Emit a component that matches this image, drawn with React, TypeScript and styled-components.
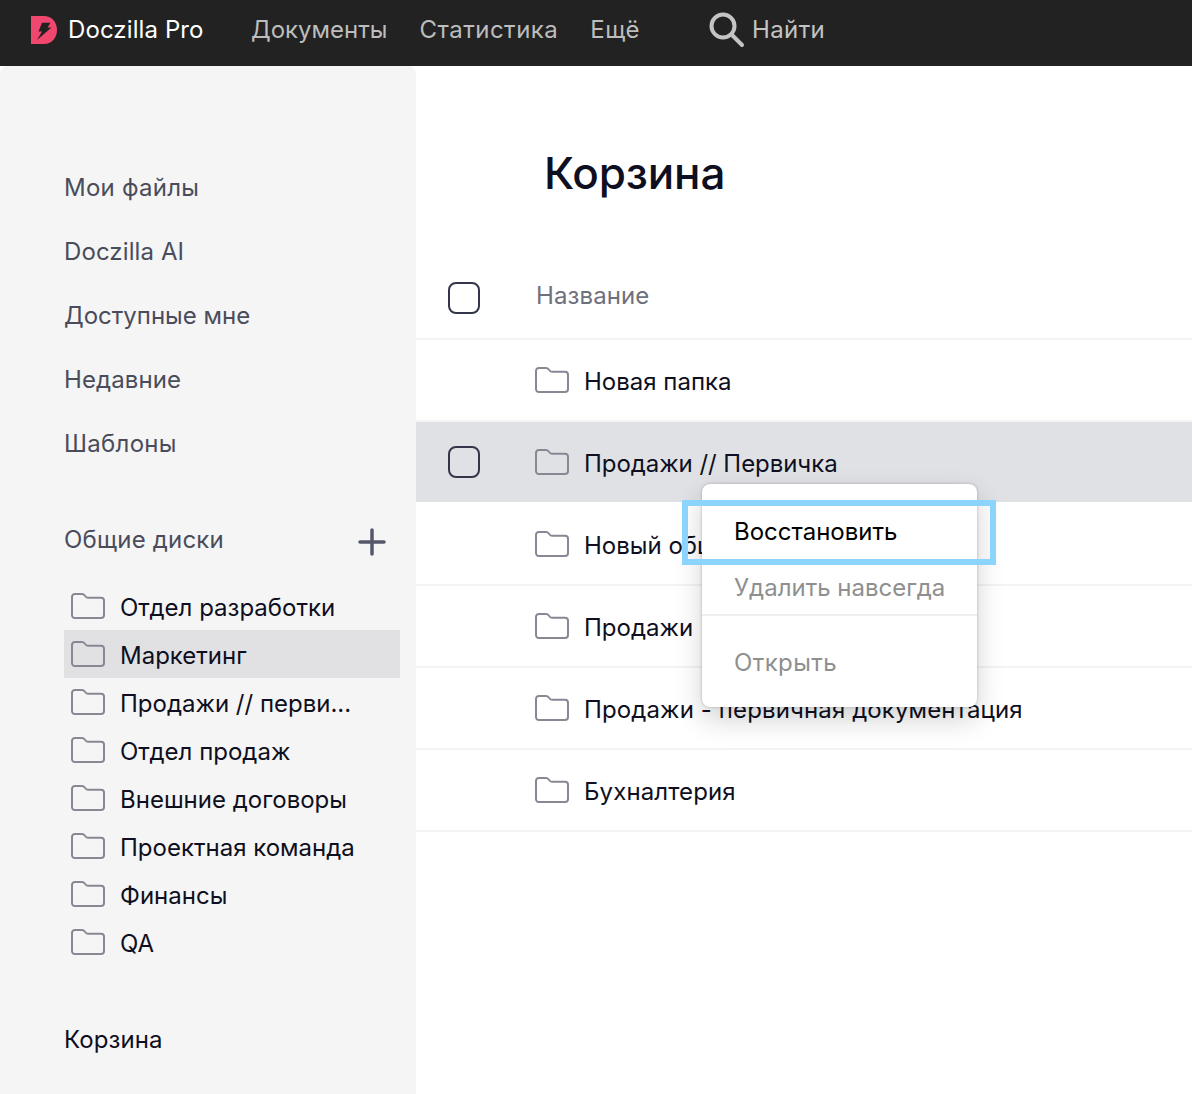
import React from "react";
import styled, { createGlobalStyle } from "styled-components";

const GlobalStyle = createGlobalStyle`
  html, body {
    margin: 0;
    padding: 0;
    background: #222222;
  }
  body {
    font-family: Inter, "Liberation Sans", sans-serif;
    width: 1192px;
    height: 1094px;
    overflow: hidden;
  }
  * {
    box-sizing: border-box;
  }
`;

const Page = styled.div`
  width: 1192px;
  height: 1094px;
  display: flex;
  flex-direction: column;
  overflow: hidden;
`;

const TopBar = styled.header`
  height: 66px;
  flex: none;
  display: flex;
  align-items: center;
  padding: 0 0 7px 31px;
  background: #222222;
`;

const Brand = styled.div`
  display: flex;
  align-items: center;
  gap: 11px;
  width: 220px;
  color: #ffffff;
  font-size: 24px;
  letter-spacing: 0.1px;
`;

const TopLink = styled.a<{ $spacing?: number }>`
  color: #bdbdbd;
  font-size: 24px;
  letter-spacing: ${(props) => props.$spacing || 0}px;
  margin-right: 32px;
`;

const Search = styled.div`
  display: flex;
  align-items: center;
  gap: 7px;
  margin-left: 37px;
  color: #c4c4c4;
  font-size: 24px;
  letter-spacing: 0.35px;
`;

const Body = styled.div`
  flex: 1;
  display: flex;
  background: #ffffff;
`;

const Sidebar = styled.aside`
  width: 416px;
  flex: none;
  padding: 89px 16px 0 64px;
  background: #f5f5f5;
  border-radius: 8px 8px 0 0;
`;

const NavItem = styled.div<{ $dark?: boolean; $spacing?: number }>`
  height: 64px;
  display: flex;
  align-items: center;
  color: ${(props) => (props.$dark ? "#0e0f20" : "#4a4c5c")};
  font-size: 24px;
  letter-spacing: ${(props) => props.$spacing || 0}px;
`;

const DrivesHeader = styled.div`
  height: 64px;
  margin-top: 32px;
  padding-right: 14px;
  display: flex;
  align-items: center;
  justify-content: space-between;
  color: #4a4c5c;
  font-size: 24px;
  letter-spacing: 0.2px;
`;

const PlusWrap = styled.span`
  display: flex;
  padding-top: 6px;
`;

const DriveList = styled.div`
  margin: 11px 0 41px;
`;

const DriveRow = styled.div<{ $active?: boolean }>`
  height: 48px;
  display: flex;
  align-items: center;
  gap: 15px;
  padding-left: 7px;
  background: ${(props) => (props.$active ? "#e1e1e4" : "transparent")};
  color: #0e0f20;
  font-size: 24px;
`;

const DriveName = styled.span`
  padding-top: 3px;
`;

const Main = styled.main`
  position: relative;
  flex: 1;
  min-width: 0;
`;

const Title = styled.h1`
  height: 184px;
  margin: 0;
  padding: 76px 0 0 128px;
  color: #0e0f20;
  font-size: 44px;
  font-weight: 500;
  line-height: 62px;
  letter-spacing: -0.15px;
`;

const HeaderRow = styled.div`
  height: 90px;
  display: flex;
  align-items: center;
  padding: 2px 0 0 32px;
  border-bottom: 2px solid #f3f3f4;
  color: #6e707c;
  font-size: 24px;
  letter-spacing: 0.1px;
`;

const Row = styled.div<{ $selected?: boolean }>`
  height: 82px;
  display: flex;
  align-items: center;
  padding-left: ${(props) => (props.$selected ? "32px" : "119px")};
  border-bottom: 2px solid ${(props) => (props.$selected ? "#ffffff" : "#f3f3f4")};
  background: ${(props) => (props.$selected ? "#e0e1e5" : "#ffffff")};
  color: #0e0f20;
  font-size: 24px;
`;

const RowLabel = styled.span<{ $spacing?: number }>`
  padding-top: 2px;
  letter-spacing: ${(props) => props.$spacing || 0}px;
`;

const Check = styled.span<{ $gap: number; $drop?: number }>`
  width: 32px;
  height: 32px;
  flex: none;
  margin-top: ${(props) => props.$drop || 0}px;
  margin-right: ${(props) => props.$gap}px;
  border: 2px solid #33364a;
  border-radius: 8px;
`;

const FolderGap = styled.span`
  display: flex;
  margin-right: 15px;
`;

const Menu = styled.div`
  position: absolute;
  left: 286px;
  top: 418px;
  width: 275px;
  height: 223px;
  padding-top: 19px;
  background: #ffffff;
  border-radius: 8px;
  box-shadow: 0 0 3px rgba(0, 0, 0, 0.25), 0 12px 28px rgba(0, 0, 0, 0.18);
`;

const MenuItem = styled.div<{ $muted?: boolean; $spacing?: number }>`
  height: 56px;
  display: flex;
  align-items: center;
  padding-left: 32px;
  color: ${(props) => (props.$muted ? "#8f8f8f" : "#000000")};
  font-size: 24px;
  letter-spacing: ${(props) => props.$spacing || 0}px;
`;

const MenuDivider = styled.div`
  height: 2px;
  margin: -1px 0 18px;
  background: #eeeeee;
`;

const Highlight = styled.div`
  position: absolute;
  left: 266px;
  top: 434px;
  width: 314px;
  height: 65px;
  border: 6px solid #8ad4fd;
`;

const FolderIcon = () => (
  <svg width="34" height="26" viewBox="0 0 34 26" fill="none">
    <path
      d="M1 4C1 2.200 2.200 1 4 1h7c1.300 0 2 .5 2.800 1.500l.8 1c.6.8 1.200 1.300 2.400 1.300H30c1.800 0 3 1.200 3 3V22c0 1.800-1.200 3-3 3H4c-1.800 0-3-1.200-3-3V4z"
      stroke="#868894"
      strokeWidth="2"
    />
  </svg>
);

const Logo = () => (
  <svg width="26" height="28" viewBox="0 0 26 28">
    <path d="M0 0h13c7.500 0 13 6 13 14s-5.500 14-13 14H0V0z" fill="#f0476f" />
    <path d="M11 6.700h8.500l-3 4.800h4L6 24l5-8.500H7.500L11 6.700z" fill="#222222" />
  </svg>
);

const SearchIcon = () => (
  <svg width="36" height="36" viewBox="0 0 36 36" fill="none" stroke="#c4c4c4" strokeWidth="4">
    <circle cx="14" cy="14" r="11.500" />
    <path d="M22.500 22.500L33 33" strokeLinecap="round" />
  </svg>
);

const PlusIcon = () => (
  <svg width="28" height="28" viewBox="0 0 28 28" fill="none" stroke="#55586a" strokeWidth="3.500">
    <path d="M14 2v24M2 14h24" strokeLinecap="round" />
  </svg>
);

const drives = [
  "Отдел разработки",
  "Маркетинг",
  "Продажи // перви...",
  "Отдел продаж",
  "Внешние договоры",
  "Проектная команда",
  "Финансы",
  "QA",
];

const files = [
  { name: "Новая папка" },
  { name: "Продажи // Первичка", spacing: -0.05 },
  { name: "Новый общий диск" },
  { name: "Продажи" },
  { name: "Продажи - первичная документация", spacing: 0.12 },
  { name: "Бухналтерия", spacing: 0.1 },
];

export default function App() {
  return (
    <Page>
      <GlobalStyle />
      <TopBar>
        <Brand>
          <Logo />
          Doczilla Pro
        </Brand>
        <TopLink>Документы</TopLink>
        <TopLink $spacing={0.5}>Статистика</TopLink>
        <TopLink $spacing={0.5}>Ещё</TopLink>
        <Search>
          <SearchIcon />
          Найти
        </Search>
      </TopBar>
      <Body>
        <Sidebar>
          <NavItem $spacing={0.25}>Мои файлы</NavItem>
          <NavItem $spacing={0.1}>Doczilla AI</NavItem>
          <NavItem>Доступные мне</NavItem>
          <NavItem $spacing={0.1}>Недавние</NavItem>
          <NavItem $spacing={0.3}>Шаблоны</NavItem>
          <DrivesHeader>
            Общие диски
            <PlusWrap>
              <PlusIcon />
            </PlusWrap>
          </DrivesHeader>
          <DriveList>
            {drives.map((name) => (
              <DriveRow key={name} $active={name === "Маркетинг"}>
                <FolderIcon />
                <DriveName>{name}</DriveName>
              </DriveRow>
            ))}
          </DriveList>
          <NavItem $dark $spacing={0.1}>Корзина</NavItem>
        </Sidebar>
        <Main>
          <Title>Корзина</Title>
          <HeaderRow>
            <Check $gap={56} $drop={6} />
            Название
          </HeaderRow>
          {files.map((file, i) => (
            <Row key={file.name} $selected={i === 1}>
              {i === 1 && <Check $gap={55} />}
              <FolderGap>
                <FolderIcon />
              </FolderGap>
              <RowLabel $spacing={file.spacing}>{file.name}</RowLabel>
            </Row>
          ))}
          <Menu>
            <MenuItem>Восстановить</MenuItem>
            <MenuItem $muted>Удалить навсегда</MenuItem>
            <MenuDivider />
            <MenuItem $muted $spacing={0.4}>Открыть</MenuItem>
          </Menu>
          <Highlight />
        </Main>
      </Body>
    </Page>
  );
}
